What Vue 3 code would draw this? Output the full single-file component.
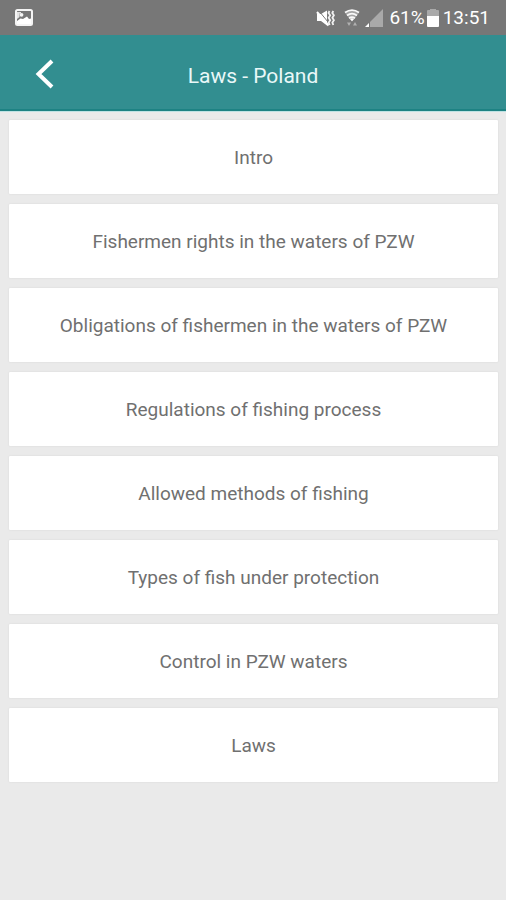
<script setup>
const sections = [
  'Intro',
  'Fishermen rights in the waters of PZW',
  'Obligations of fishermen in the waters of PZW',
  'Regulations of fishing process',
  'Allowed methods of fishing',
  'Types of fish under protection',
  'Control in PZW waters',
  'Laws',
]
</script>

<template>
  <div class="screen">
    <div class="status">
      <svg class="picture" width="18" height="17" viewBox="0 0 18 17" aria-hidden="true">
        <rect x="1" y="1" width="16" height="15" rx="1.5" fill="#777" stroke="#f4f4f4" stroke-width="2" />
        <path d="M2 3 H6 V4.5 H4.5 V8 L2 10 Z" fill="#e4e4e4" />
        <circle cx="6.5" cy="5.8" r="1.9" fill="#f4f4f4" />
        <path d="M2 12 L5.5 9.5 L8 10 L12 7.5 L14 10 L16 9.5 V15 H2 Z" fill="#fff" />
      </svg>
      <div class="indicators">
        <svg class="mute" width="19" height="18" viewBox="0 0 19 18" aria-hidden="true">
          <path d="M1 5 H5 L11 1.5 V16.5 L5 12 H1 Z" fill="#fff" />
          <path d="M3 2 L12 13" fill="none" stroke="#777" stroke-width="1" />
          <path d="M1 3 L12.5 16.5" fill="none" stroke="#fff" stroke-width="2" />
          <path d="M13.5 2 L12.5 4 L14.2 6.3 L12.7 8.8 L14.2 11.3 L12.7 13.6 L13.7 16 M17.3 2 L16.3 4 L17.9 6.3 L16.4 8.8 L17.9 11.3 L16.4 13.6 L17.3 16" fill="none" stroke="#f2f2f2" stroke-width="1.8" />
        </svg>
        <svg class="wifi" width="16" height="18" viewBox="0 0 16 18" aria-hidden="true">
          <path d="M0.8 3.5 Q8 -1.4 15.2 3.5 L8 12.5 Z" fill="#a4a4a4" />
          <path d="M1 3.5 Q8 -1.2 15 3.5 M3 6.4 Q8 3 13 6.4 M5 9.2 Q8 7 11 9.2" fill="none" stroke="#f8f8f8" stroke-width="1.8" />
          <path d="M6 10 Q8 8.6 10 10 L8 12.3 Z" fill="#fff" />
          <path d="M3 13.5 H7 L5 17 Z M9 16.5 L11 13 L13 16.5 Z" fill="#b0b0b0" />
        </svg>
        <svg class="signal" width="18" height="18" viewBox="0 0 18 18" aria-hidden="true">
          <path d="M18 0 V18 H5 V13 Z" fill="#a9a9a9" />
          <path d="M4 14 V18 H0 Z" fill="#fff" />
        </svg>
        <span class="percent">61%</span>
        <svg class="battery" width="12" height="18" viewBox="0 0 12 18" aria-hidden="true">
          <path d="M3 0 H9 V1 H11 Q12 1 12 2 V8 H0 V2 Q0 1 1 1 H3 Z" fill="#aaa" />
          <path d="M0 7 H12 V17 Q12 18 11 18 H1 Q0 18 0 17 Z" fill="#fff" />
        </svg>
        <span>13:51</span>
      </div>
    </div>

    <header class="bar">
      <button class="back" type="button" aria-label="Back">
        <svg width="20" height="30" viewBox="0 0 20 30" aria-hidden="true">
          <path d="M17 2 L3.5 15 L17 28" fill="none" stroke="#fff" stroke-width="4" />
        </svg>
      </button>
      <h1 class="title">Laws - Poland</h1>
    </header>

    <main class="list">
      <button v-for="section in sections" :key="section" class="card" type="button">
        {{ section }}
      </button>
    </main>
  </div>
</template>

<style>
body {
  margin: 0;
  background: #eaeaea;
}
</style>

<style scoped>
.screen {
  min-height: 100vh;
  background: #eaeaea;
  font-family: Roboto, "Liberation Sans", sans-serif;
}

.status {
  display: flex;
  align-items: center;
  justify-content: space-between;
  box-sizing: border-box;
  height: 35px;
  padding: 0 16px 0 15px;
  background: #777;
  color: #fff;
  font-size: 19px;
  line-height: 36px;
}

.indicators {
  display: flex;
  align-items: center;
}

.mute {
  margin-right: 9px;
}

.wifi {
  margin-right: 5px;
}

.signal {
  margin-right: 6px;
}

.battery {
  margin: 0 4px 0 2px;
}

.bar {
  display: grid;
  grid-template-columns: 88px 1fr 88px;
  align-items: center;
  box-sizing: border-box;
  height: 76px;
  border-bottom: 2px solid #1d8283;
  background: #328e90;
  box-shadow: 0 1px 0 #bfe2e3;
}

.back {
  display: flex;
  align-items: center;
  justify-content: center;
  height: 74px;
  padding: 4px 0 0 2px;
  border: 0;
  background: none;
}

.title {
  margin: 0;
  padding-top: 7px;
  color: #e9f8f8;
  font-size: 21px;
  font-weight: 400;
  line-height: 26px;
  text-align: center;
}

.list {
  display: grid;
  gap: 10px;
  padding: 9px 8px 9px 9px;
}

.card {
  min-height: 74px;
  padding: 4px 16px 2px;
  border: 0;
  border-radius: 1px;
  background: #fff;
  box-shadow: 0 0 2px #d6d6d6;
  color: #707070;
  font-family: inherit;
  font-size: 19px;
  line-height: 24px;
  text-align: center;
}
</style>
